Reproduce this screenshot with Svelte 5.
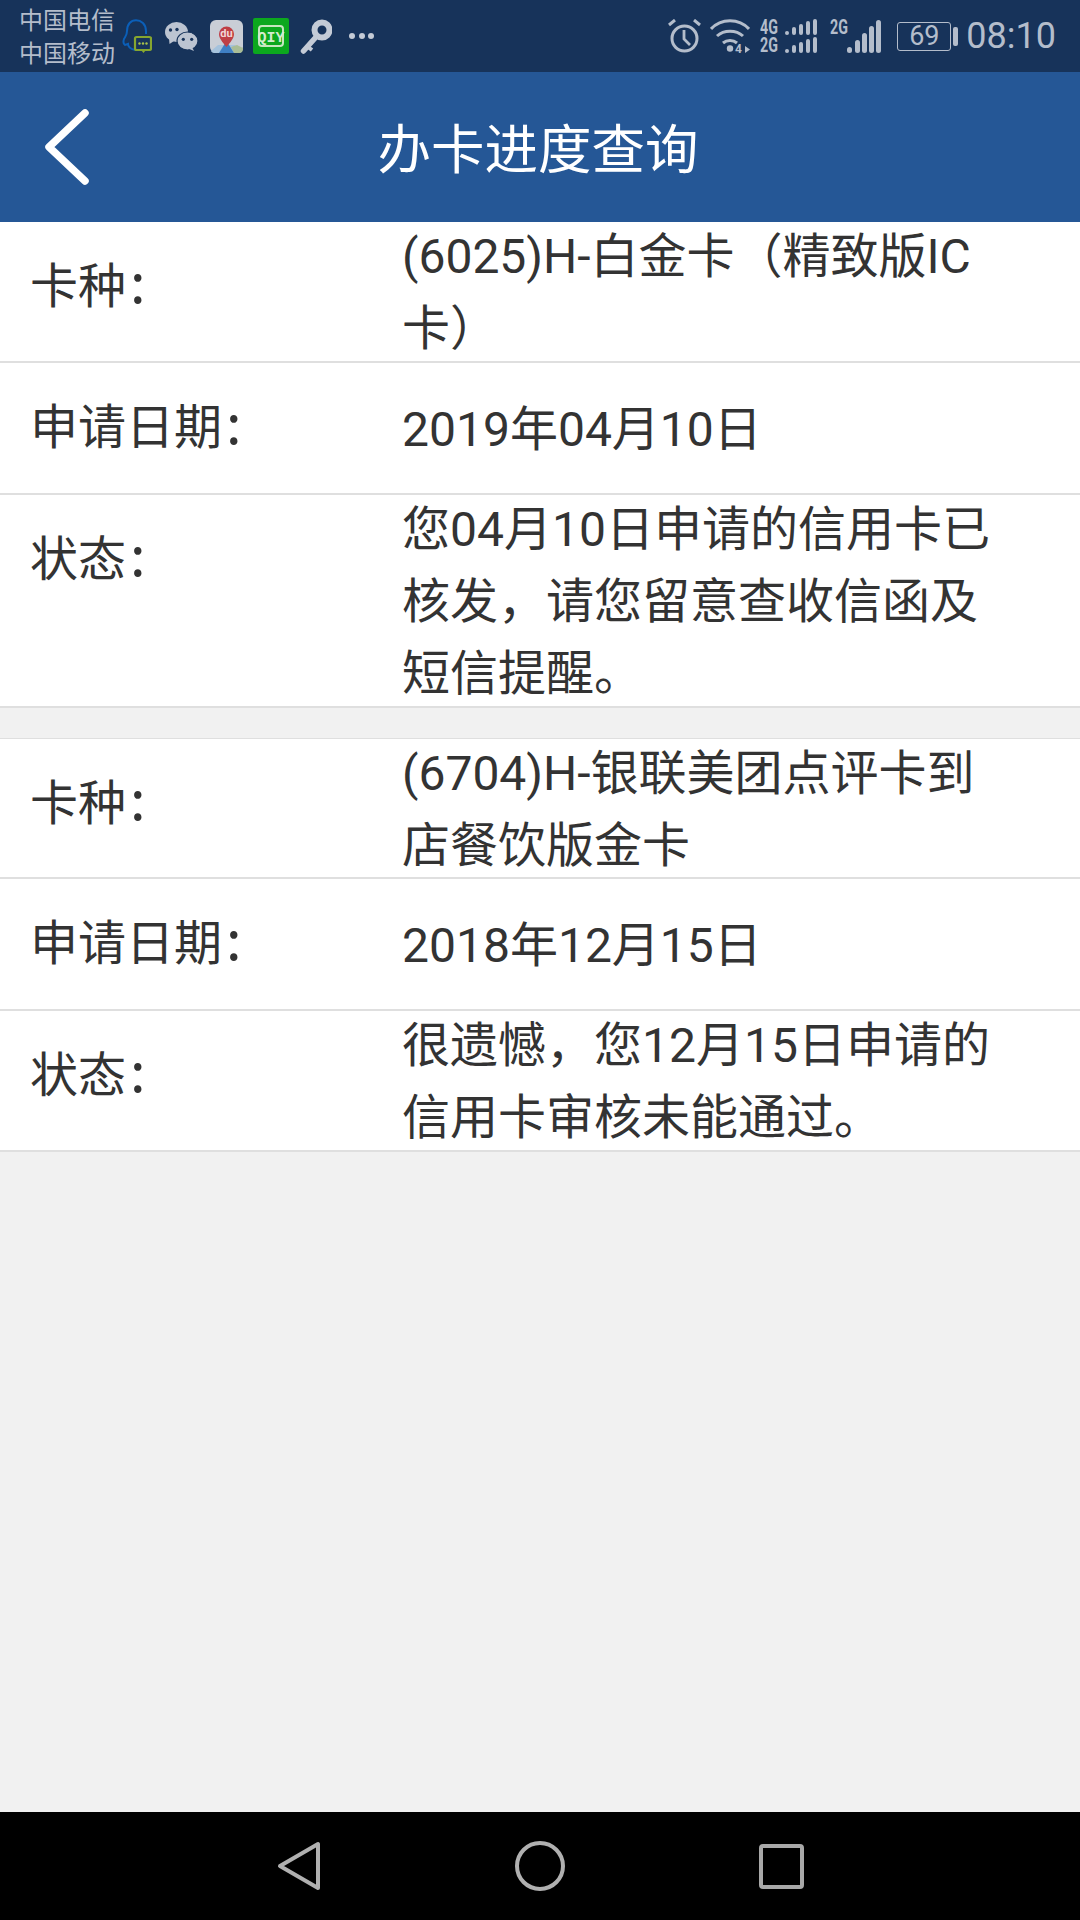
<script>
  const groups = [
    [
      { label: '卡种', value: '(6025)H-白金卡（精致版IC卡）', h: 141 },
      { label: '申请日期', value: '2019年04月10日', h: 132 },
      { label: '状态', value: '您04月10日申请的信用卡已核发，请您留意查收信函及短信提醒。', h: 213 }
    ],
    [
      { label: '卡种', value: '(6704)H-银联美团点评卡到店餐饮版金卡', h: 140 },
      { label: '申请日期', value: '2018年12月15日', h: 132 },
      { label: '状态', value: '很遗憾，您12月15日申请的信用卡审核未能通过。', h: 141 }
    ]
  ];
  const miniBars = [4, 8, 11, 14, 16];
  const bigBars = [6, 13, 20, 27, 33];
</script>

<div class="screen">
  <div class="status">
    <div class="carriers"><span>中国电信</span><span>中国移动</span></div>
    <div class="notes">
      <svg class="n-qq" width="30" height="34" viewBox="0 0 30 34" fill="none">
        <path d="M24 15V12C24 5 19 1.200 14 1.200S5 5 5 12c0 4-1.500 5-3 8-1 3-.5 5 1 6l3-1c0 3 3 5 7 6" stroke="#0b5fb8" stroke-width="2"/>
        <rect x="13" y="18" width="16" height="13" rx="1.500" fill="#17335a" stroke="#86a62f" stroke-width="2.200"/>
        <path d="M19 31h5l-2.500 3z" fill="#86a62f"/>
        <g fill="#a9c24a"><circle cx="17.500" cy="24.500" r="1.200"/><circle cx="21" cy="24.500" r="1.200"/><circle cx="24.500" cy="24.500" r="1.200"/></g>
      </svg>
      <svg class="n-wx" width="33" height="29" viewBox="0 0 33 29">
        <ellipse cx="11.500" cy="10" rx="11.500" ry="10" fill="#bcc4d1"/>
        <path d="M4 16l.5 6 6-4z" fill="#bcc4d1"/>
        <ellipse cx="22.500" cy="19" rx="10.500" ry="9" fill="#bcc4d1" stroke="#17335a" stroke-width="1.200"/>
        <path d="M27 25l2 4-6-2.500z" fill="#bcc4d1"/>
        <g fill="#17335a"><circle cx="5.500" cy="8" r="1.700"/><circle cx="12" cy="7.500" r="1.700"/><circle cx="18.300" cy="17.300" r="1.600"/><circle cx="26.700" cy="17.300" r="1.600"/></g>
      </svg>
      <svg class="n-du" width="33" height="33" viewBox="0 0 33 33">
        <rect width="33" height="33" rx="6" fill="#c9ced6"/>
        <path d="M1 31l7-6h17l7 6a4 4 0 0 1-3 2H4a4 4 0 0 1-3-2z" fill="#a5c2dc"/>
        <path d="M24 33l-3-6 6-2 6 3v2a4 4 0 0 1-4 3z" fill="#a9bd96"/>
        <path d="M9 33l7.500-12L24 33z" fill="#3f7fc4"/>
        <path d="M16.500 27c-4-5-7.500-8.500-7.500-13a7.500 7.500 0 0 1 15 0c0 4.500-3.500 8-7.500 13z" fill="#bf3f45"/>
        <text x="16.500" y="16.500" class="du">du</text>
      </svg>
      <svg class="n-qy" width="36" height="36" viewBox="0 0 36 36" fill="none">
        <rect width="36" height="36" rx="2" fill="#0ca81e"/>
        <rect x="6" y="8" width="24" height="20" rx="3" stroke="#c6e6bf" stroke-width="2"/>
        <text x="18" y="24" class="qiy">QIY</text>
      </svg>
      <svg class="n-key" width="32" height="35" viewBox="0 0 32 35" fill="none">
        <circle cx="22" cy="11" r="7.500" stroke="#c4cbd6" stroke-width="6"/>
        <path d="M16 18L3.500 32" stroke="#c4cbd6" stroke-width="5.500" stroke-linecap="round"/>
        <path d="M8 28l4 3" stroke="#c4cbd6" stroke-width="4"/>
      </svg>
      <div class="dots"><i></i><i></i><i></i></div>
    </div>
    <div class="sys">
      <svg width="33" height="34" viewBox="0 0 33 34" fill="none" stroke="#b4bdcb">
        <circle cx="16.500" cy="19.500" r="12.500" stroke-width="3"/>
        <path d="M16 11v9l6 6" stroke-width="2.800"/>
        <path d="M1 6l6-5M32 6l-6-5" stroke-width="3"/>
      </svg>
      <svg class="wifi" width="40" height="40" viewBox="0 0 40 40" fill="none" stroke="#b4bdcb" stroke-width="3">
        <path d="M1 10C11 -1 29 -1 39 10"/>
        <path d="M7 17c7-6.500 19-6.500 26 0"/>
        <path d="M13 24c4-3.500 10-3.500 14 0"/>
        <circle cx="20" cy="29.500" r="3.200" fill="#b4bdcb" stroke="none"/>
        <text x="25" y="34" class="arrows">4</text>
        <path d="M35 27l5 3.500-5 3.500z" fill="#b4bdcb" stroke="none"/>
      </svg>
      <div class="sig2">
        {#each ['4G', '2G'] as net}
          <div class="sigrow">
            <b>{net}</b>
            <span class="mini">{#each miniBars as h}<i style="height:{h}px"></i>{/each}</span>
          </div>
        {/each}
      </div>
      <div class="sig1">
        <b>2G</b>
        <span class="big">{#each bigBars as h}<i style="height:{h}px"></i>{/each}</span>
      </div>
      <div class="batt"><div class="cell">69</div><div class="nub"></div></div>
      <div class="time">08:10</div>
    </div>
  </div>

  <header>
    <svg class="back" width="48" height="78" viewBox="0 0 48 78" fill="none">
      <path d="M42 5L6 39l36 34" stroke="#fff" stroke-width="7.500" stroke-linecap="round" stroke-linejoin="round"/>
    </svg>
    <h1>办卡进度查询</h1>
  </header>

  <main>
    {#each groups as rows}
      <section>
        {#each rows as row}
          <div class="row" style="height:{row.h}px">
            <div class="label">{row.label}<span class="colon">:</span></div>
            <div class="value">{row.value}</div>
          </div>
        {/each}
      </section>
    {/each}
  </main>

  <nav>
    <svg width="44" height="50" viewBox="0 0 44 50" fill="none" stroke="#b0b0b0" stroke-width="4" stroke-linejoin="round"><path d="M41 3v44L3 25z"/></svg>
    <svg width="50" height="50" viewBox="0 0 50 50" fill="none" stroke="#b0b0b0" stroke-width="4"><circle cx="25" cy="25" r="23"/></svg>
    <svg width="45" height="45" viewBox="0 0 45 45" fill="none" stroke="#a8a8a8" stroke-width="4" stroke-linejoin="round"><rect x="2" y="2" width="41" height="41" rx="2"/></svg>
  </nav>
</div>

<style>
  :global(body) { margin: 0; background: #f1f1f1; }
  .screen {
    width: 1080px; height: 1920px; display: flex; flex-direction: column;
    background: #f1f1f1; font-family: Roboto, "Noto Sans CJK SC", sans-serif; overflow: hidden;
  }
  .status {
    height: 72px; flex: none; background: #17335a; color: #b4bdcb;
    display: flex; align-items: center; padding: 0 24px 0 19px; box-sizing: border-box;
  }
  .carriers { display: flex; flex-direction: column; font-size: 24px; line-height: 33px; width: 103px; flex: none; padding-top: 4px; }
  .notes { display: flex; align-items: center; }
  .n-qq { margin-right: 13px; }
  .n-wx { margin-right: 12px; }
  .n-du { margin-right: 10px; }
  .n-qy { margin-right: 11px; }
  .n-key { margin-right: 17px; }
  .dots { display: flex; gap: 3.500px; }
  .dots i { width: 6px; height: 6px; border-radius: 50%; background: #c4cbd6; }
  .du { font: 700 11px Roboto, sans-serif; fill: #f2d6d6; text-anchor: middle; }
  .qiy { font: 700 15px "Liberation Mono", monospace; fill: #d3ecce; text-anchor: middle; }
  .arrows { font: 700 12px Roboto, sans-serif; fill: #b4bdcb; stroke: none; }
  .sys { margin-left: auto; display: flex; align-items: center; }
  .wifi { margin-left: 9px; margin-top: 6px; }
  .sig2 { display: flex; flex-direction: column; gap: 2px; margin-left: 10px; width: 57px; }
  .sigrow { display: flex; align-items: flex-end; justify-content: space-between; height: 16px; }
  .sigrow b, .sig1 b { font: 700 21px/16px Roboto, sans-serif; width: 18px; display: block; white-space: nowrap; transform: scaleX(.68); transform-origin: left; }
  .mini { display: flex; align-items: flex-end; gap: 3px; }
  .mini i { width: 4px; background: #b4bdcb; border-radius: 2px; }
  .sig1 { display: flex; align-items: flex-start; justify-content: space-between; margin-left: 13px; height: 33px; width: 51px; position: relative; }
  .sig1 b { margin-top: -1px; }
  .big { display: flex; align-items: flex-end; gap: 2.250px; position: absolute; right: 0; bottom: 0; }
  .big i { width: 5px; background: #b4bdcb; border-radius: 2.500px; }
  .batt { display: flex; align-items: center; gap: 2px; margin-left: 16px; }
  .cell { width: 54px; height: 29px; box-sizing: border-box; border: 1.500px solid #b4bdcb; border-radius: 3px; font-size: 27px; line-height: 26px; text-align: center; }
  .nub { width: 5px; height: 19px; background: #b4bdcb; border-radius: 2px; }
  .time { font-size: 36px; line-height: 40px; margin-left: 8px; }
  header {
    height: 150px; flex: none; background: #255796; position: relative; box-sizing: border-box;
    display: flex; align-items: center; justify-content: center; padding: 8px 4px 0 0;
  }
  h1 { margin: 0; font-size: 53.500px; font-weight: 400; color: #fff; line-height: 1; }
  .back { position: absolute; left: 43px; top: 36px; }
  main { flex: 1; display: flex; flex-direction: column; gap: 30px; }
  section { background: #fff; }
  section + section { border-top: 1px solid #dfdfdf; }
  .row {
    display: flex; align-items: center; box-sizing: border-box;
    border-bottom: 2px solid #dfdfdf; padding: 3px 0 0 30px; color: #333;
    font-size: 48px;
  }
  .label { width: 372px; flex: none; line-height: 72px; align-self: flex-start; margin-top: 18px; }
  .colon { font-family: "Noto Sans CJK SC", sans-serif; font-size: 56px; margin-left: 4px; }
  .value { width: 600px; line-height: 72px; }
  nav {
    height: 108px; flex: none; background: #000;
    display: flex; align-items: center; justify-content: center; gap: 194px;
  }
</style>
